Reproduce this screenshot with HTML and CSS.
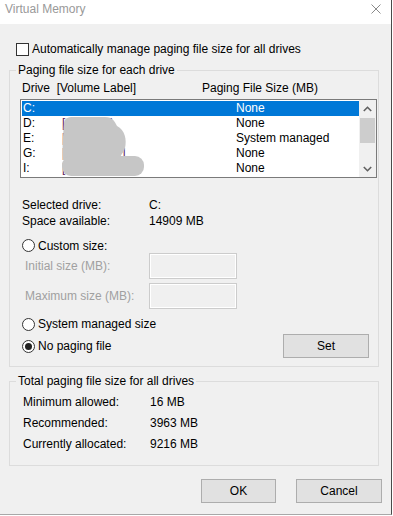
FILE: index.html
```html
<!DOCTYPE html>
<html>
<head>
    <title>Virtual Memory</title>
    <link rel="stylesheet" href="styles.css">
</head>
<body>

<div class="window">
    <div class="titlebar">
        <span class="title">Virtual Memory</span>
        <svg class="close" width="10" height="10" viewBox="0 0 10 10">
            <path d="M0.5 0.5 L9.5 9.5 M9.5 0.5 L0.5 9.5" stroke="#8a8a8a" stroke-width="1" fill="none"/>
        </svg>
    </div>

    <label class="auto-row">
        <span class="checkbox"></span>
        Automatically manage paging file size for all drives
    </label>

    <fieldset class="group">
        <legend>Paging file size for each drive</legend>

        <div class="list-header">
            <span class="col-drive-head">Drive&nbsp; [Volume Label]</span>
            <span>Paging File Size (MB)</span>
        </div>

        <div class="listbox">
            <div class="rows">
                <div class="row selected">
                    <span class="drive">C:</span><span class="vol"></span><span>None</span>
                </div>
                <div class="row">
                    <span class="drive">D:</span><span class="vol">[<span class="gap gap-d"></span>]</span><span>None</span>
                </div>
                <div class="row">
                    <span class="drive">E:</span><span class="vol">[</span><span>System managed</span>
                </div>
                <div class="row">
                    <span class="drive">G:</span><span class="vol">[<span class="gap gap-g"></span>]</span><span>None</span>
                </div>
                <div class="row">
                    <span class="drive">I:</span><span class="vol">[</span><span>None</span>
                </div>
            </div>
            <div class="scrollbar">
                <div class="arrow">
                    <svg width="9" height="6" viewBox="0 0 9 6"><polyline points="0.8,5 4.5,1.3 8.2,5" stroke="#606060" stroke-width="1.6" fill="none"/></svg>
                </div>
                <div class="track"><div class="thumb"></div></div>
                <div class="arrow">
                    <svg width="9" height="6" viewBox="0 0 9 6"><polyline points="0.8,1 4.5,4.7 8.2,1" stroke="#606060" stroke-width="1.6" fill="none"/></svg>
                </div>
            </div>
            <!-- label names blurred out in the screenshot -->
            <svg class="blur" width="130" height="77" viewBox="0 0 130 77">
                <path d="M43 24 C43 18, 47 17, 52 17 L84 17 C92 17, 94 22, 96 26 C104 30, 106 40, 104 48 C103 53, 98 55, 100 60 L46 60 L42 60 C41 50, 42 35, 43 24 Z" fill="#c6c6c6"/>
                <rect x="41" y="56" width="82" height="20" rx="9" fill="#c6c6c6"/>
            </svg>
        </div>

        <div class="info">
            <div class="info-row"><span class="info-label">Selected drive:</span><span>C:</span></div>
            <div class="info-row"><span class="info-label">Space available:</span><span>14909 MB</span></div>
        </div>

        <div class="radio-row custom">
            <span class="radio"></span>Custom size:
        </div>
        <div class="size-row">
            <span class="size-label">Initial size (MB):</span>
            <span class="textbox"></span>
        </div>
        <div class="size-row second">
            <span class="size-label">Maximum size (MB):</span>
            <span class="textbox"></span>
        </div>

        <div class="radio-row system">
            <span class="radio"></span>System managed size
        </div>
        <div class="radio-row nopaging">
            <span class="radio checked"></span>No paging file
            <button class="btn set-btn">Set</button>
        </div>
    </fieldset>

    <fieldset class="group totals">
        <legend>Total paging file size for all drives</legend>
        <div class="total-row"><span class="total-label">Minimum allowed:</span><span>16 MB</span></div>
        <div class="total-row"><span class="total-label">Recommended:</span><span>3963 MB</span></div>
        <div class="total-row"><span class="total-label">Currently allocated:</span><span>9216 MB</span></div>
    </fieldset>

    <div class="buttons">
        <button class="btn ok-btn">OK</button>
        <button class="btn cancel-btn">Cancel</button>
    </div>
</div>

</body>
</html>
```

FILE: styles.css
```css
body {
    margin: 0;
    background: #fff;
    font-family: "Liberation Sans", Arial, sans-serif;
    font-size: 12px;
    color: #000;
}
.window {
    width: 392px;
    height: 515px;
    box-sizing: border-box;
    background: #f0f0f0;
    border-right: 1px solid #4a4a4a;
    border-bottom: 1px solid #a8a8a8;
    display: flex;
    flex-direction: column;
}
.titlebar {
    height: 24px;
    flex-shrink: 0;
    background: #fff;
    display: flex;
    align-items: flex-start;
    justify-content: space-between;
    padding: 1px 10px 0 5px;
    box-sizing: border-box;
    line-height: 16px;
    color: #999;
}
.close {
    margin-top: 3px;
}
.auto-row {
    display: flex;
    align-items: center;
    gap: 3px;
    height: 16px;
    line-height: 16px;
    margin: 17px 0 0 16px;
}
.checkbox {
    width: 13px;
    height: 13px;
    box-sizing: border-box;
    border: 1px solid #333;
    background: #fff;
}
.group {
    margin: 5px 12px 0 9px;
    padding: 0 1px 8px 10px;
    border: 1px solid #dcdcdc;
    min-width: 0;
}
.group legend {
    padding: 0 2px;
    margin-left: -4px;
    line-height: 16px;
}
.list-header {
    display: flex;
    height: 16px;
    line-height: 16px;
    margin-top: 2px;
    padding-left: 2px;
}
.col-drive-head {
    width: 180px;
}
.listbox {
    position: relative;
    display: flex;
    width: 357px;
    height: 79px;
    box-sizing: border-box;
    margin-top: 3px;
    padding: 1px 0 1px 1px;
    border: 1px solid #7a7a7a;
    background: #fff;
}
.rows {
    flex: 1;
}
.row {
    display: flex;
    height: 15px;
    line-height: 15px;
    padding-left: 1px;
}
.row.selected {
    background: #0078d7;
    color: #fff;
}
.drive {
    width: 39px;
}
.vol {
    width: 174px;
    color: #5a1e5a;
}
.gap {
    display: inline-block;
}
.gap-d {
    width: 44px;
}
.gap-g {
    width: 57px;
}
.scrollbar {
    width: 17px;
    margin: -1px 0;
    display: flex;
    flex-direction: column;
    background: #f0f0f0;
}
.arrow {
    height: 17px;
    display: flex;
    align-items: center;
    justify-content: center;
}
.track {
    flex: 1;
    padding: 1px 1px 0;
}
.thumb {
    height: 25px;
    background: #cdcdcd;
}
.blur {
    position: absolute;
    left: 0;
    top: 0;
    pointer-events: none;
}
.info {
    margin-top: 19px;
    padding-left: 2px;
}
.info-row {
    display: flex;
    height: 16px;
    line-height: 16px;
}
.info-label {
    width: 127px;
}
.radio-row {
    display: flex;
    align-items: center;
    gap: 3px;
    height: 16px;
    line-height: 16px;
    padding-left: 2px;
}
.radio-row.custom {
    margin-top: 9px;
    height: 15px;
}
.radio-row.system {
    margin-top: 7px;
}
.radio-row.nopaging {
    margin-top: 2px;
    height: 24px;
}
.radio {
    width: 13px;
    height: 13px;
    box-sizing: border-box;
    border: 1px solid #333;
    border-radius: 50%;
    background: #fff;
    position: relative;
}
.radio.checked::after {
    content: "";
    position: absolute;
    left: 2px;
    top: 2px;
    width: 7px;
    height: 7px;
    border-radius: 50%;
    background: #222;
}
.size-row {
    display: flex;
    align-items: center;
    height: 26px;
    padding-left: 5px;
    color: #a0a0a0;
}
.size-row.second {
    margin-top: 4px;
}
.size-label {
    width: 124px;
}
.textbox {
    width: 88px;
    height: 26px;
    box-sizing: border-box;
    border: 1px solid #cccccc;
    box-shadow: inset 0 0 0 1px #fff;
    background: #f0f0f0;
}
.btn {
    height: 24px;
    box-sizing: border-box;
    border: 1px solid #adadad;
    background: #e1e1e1;
    font-family: "Liberation Sans", Arial, sans-serif;
    font-size: 12px;
    color: #000;
    padding: 0;
}
.set-btn {
    width: 86px;
    margin-left: auto;
    margin-right: 8px;
}
.totals {
    margin-top: 6px;
    padding-bottom: 10px;
}
.total-row {
    display: flex;
    height: 21px;
    line-height: 21px;
    padding-left: 3px;
}
.total-row:first-of-type {
    margin-top: 3px;
}
.total-label {
    width: 127px;
}
.buttons {
    display: flex;
    justify-content: flex-end;
    gap: 20px;
    margin: 13px 9px 0 0;
}
.ok-btn {
    width: 75px;
}
.cancel-btn {
    width: 86px;
}
```
